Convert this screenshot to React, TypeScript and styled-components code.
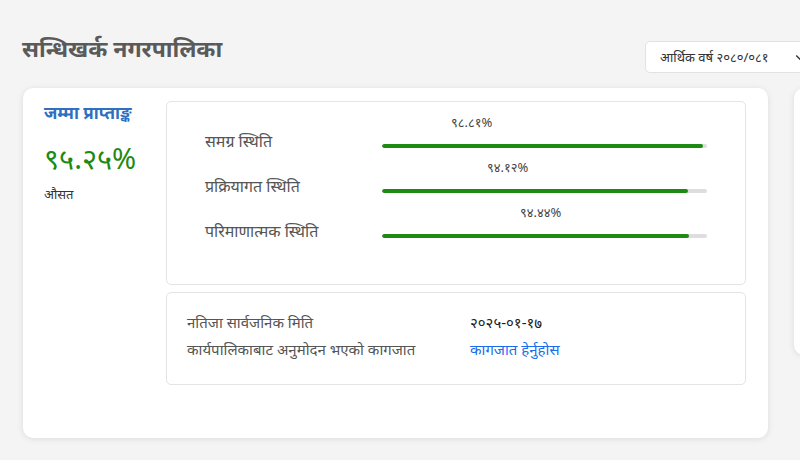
import React from 'react'
import styled, { createGlobalStyle } from 'styled-components'

const GlobalStyle = createGlobalStyle`
  html, body {
    margin: 0;
    padding: 0;
    background: #f4f4f4;
    font-family: 'Noto Sans', 'DejaVu Sans', sans-serif;
    overflow: hidden;
  }
`

const Page = styled.div`
  width: 800px;
  height: 460px;
  box-sizing: border-box;
  padding: 30px 0 0 22px;
  overflow: hidden;
`

const Header = styled.div`
  display: flex;
  justify-content: space-between;
  align-items: flex-start;
  height: 58px;
`

const Title = styled.h1`
  margin: 0;
  font-size: 23px;
  font-weight: 700;
  color: #5a5a5a;
  line-height: 36px;
`

const Select = styled.div`
  display: flex;
  align-items: center;
  gap: 25px;
  margin-top: 11px;
  height: 32px;
  box-sizing: border-box;
  padding: 0 0 0 14px;
  width: 180px;
  margin-right: -25px;
  background: #fff;
  border: 1px solid #e2e2e2;
  border-radius: 5px;
  font-size: 13px;
  color: #333;
  svg {
    flex: none;
  }
`

const Cards = styled.div`
  display: flex;
  gap: 26px;
  align-items: flex-start;
`

const Card = styled.div`
  flex: none;
  width: 745px;
  height: 350px;
  box-sizing: border-box;
  margin-left: 1px;
  padding: 12px 22px 0 21px;
  background: #fff;
  border-radius: 10px;
  box-shadow: 0 1px 6px rgba(0, 0, 0, 0.1);
  display: grid;
  grid-template-columns: 110px 1fr;
  column-gap: 12px;
  align-content: start;
`

const SideCard = styled.div`
  flex: none;
  width: 200px;
  height: 267px;
  background: #fff;
  border-radius: 10px;
  box-shadow: 0 1px 6px rgba(0, 0, 0, 0.1);
`

const Summary = styled.div`
  display: flex;
  flex-direction: column;
`

const SummaryTitle = styled.div`
  font-size: 17px;
  font-weight: 700;
  color: #2e6fbf;
  line-height: 26px;
`

const Score = styled.div`
  margin-top: 14px;
  font-size: 29px;
  color: #1d8a12;
  line-height: 36px;
`

const Caption = styled.div`
  margin-top: 9px;
  font-size: 13px;
  color: #333;
`

const Boxes = styled.div`
  display: flex;
  flex-direction: column;
  gap: 7px;
  padding-top: 1px;
`

const Box = styled.div<{ $pad: string; $height: number }>`
  box-sizing: border-box;
  height: ${({ $height }) => $height}px;
  padding: ${({ $pad }) => $pad};
  border: 1px solid #e4e4e4;
  border-radius: 5px;
`

const StatusRow = styled.div`
  display: grid;
  grid-template-columns: 177px 1fr;
  height: 45px;
`

const StatusLabel = styled.div`
  align-self: end;
  padding-bottom: 6px;
  font-size: 16px;
  color: #555;
  line-height: 22px;
`

const BarCol = styled.div`
  display: flex;
  flex-direction: column;
`

const Pct = styled.div<{ $offset: number }>`
  margin-left: ${({ $offset }) => $offset}px;
  font-size: 13px;
  color: #444;
  line-height: 18px;
  height: 31px;
`

const Track = styled.div`
  height: 4px;
  background: #dedede;
  border-radius: 2px;
  overflow: hidden;
`

const Fill = styled.div`
  height: 100%;
  background: #1d8a12;
  border-radius: 2px;
`

const InfoRow = styled.div`
  display: grid;
  grid-template-columns: 283px 1fr;
  font-size: 15px;
  line-height: 27px;
`

const InfoLabel = styled.div`
  color: #555;
`

const InfoValue = styled.div`
  color: #222;
`

const Link = styled.a`
  color: #1a6dea;
  text-decoration: none;
`

const statuses = [
  { label: 'समग्र स्थिति', pct: '९८.८१%', value: 98.81, offset: 69 },
  { label: 'प्रक्रियागत स्थिति', pct: '९४.१२%', value: 94.12, offset: 105 },
  { label: 'परिमाणात्मक स्थिति', pct: '९४.४४%', value: 94.44, offset: 138 },
]

const Chevron = () => (
  <svg width="12" height="12" viewBox="0 0 16 16" fill="none" stroke="#333" strokeWidth="1.8">
    <path d="M3 6l5 5 5-5" />
  </svg>
)

const App = () => {
  return (
    <Page>
      <GlobalStyle />
      <Header>
        <Title>सन्धिखर्क नगरपालिका</Title>
        <Select>
          <span>आर्थिक वर्ष २०८०/०८१</span>
          <Chevron />
        </Select>
      </Header>
      <Cards>
        <Card>
          <Summary>
            <SummaryTitle>जम्मा प्राप्ताङ्क</SummaryTitle>
            <Score>९५.२५%</Score>
            <Caption>औसत</Caption>
          </Summary>
          <Boxes>
            <Box $pad="11px 38px 0 38px" $height={184}>
              {statuses.map((s) => (
                <StatusRow key={s.label}>
                  <StatusLabel>{s.label}</StatusLabel>
                  <BarCol>
                    <Pct $offset={s.offset}>{s.pct}</Pct>
                    <Track>
                      <Fill style={{ width: `${s.value}%` }} />
                    </Track>
                  </BarCol>
                </StatusRow>
              ))}
            </Box>
            <Box $pad="16px 20px 0 20px" $height={93}>
              <InfoRow>
                <InfoLabel>नतिजा सार्वजनिक मिति</InfoLabel>
                <InfoValue>२०२५-०१-१७</InfoValue>
              </InfoRow>
              <InfoRow>
                <InfoLabel>कार्यपालिकाबाट अनुमोदन भएको कागजात</InfoLabel>
                <Link href="#">कागजात हेर्नुहोस</Link>
              </InfoRow>
            </Box>
          </Boxes>
        </Card>
        <SideCard />
      </Cards>
    </Page>
  )
}

export default App
